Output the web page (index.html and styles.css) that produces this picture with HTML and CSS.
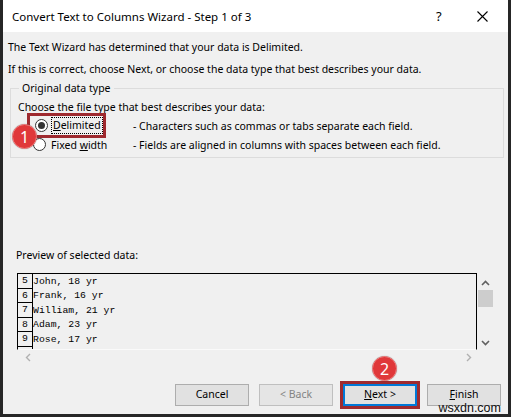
FILE: index.html
```html
<!DOCTYPE html>
<html lang="en">
<head>
  <meta charset="UTF-8">
  <title>Convert Text to Columns Wizard - Step 1 of 3</title>
  <link rel="stylesheet" href="styles.css">
</head>
<body>
  <div class="window">
    <div class="titlebar">
      <div class="title">Convert Text to Columns Wizard - Step 1 of 3</div>
      <div class="title-help">?</div>
      <div class="title-close">
        <svg width="11" height="11" viewBox="0 0 11 11"><path d="M0.5 0.5 L10.5 10.5 M10.5 0.5 L0.5 10.5" stroke="#000" stroke-width="1.1" fill="none"/></svg>
      </div>
    </div>
    <div class="content">
      <div class="intro">The Text Wizard has determined that your data is Delimited.</div>
      <div class="intro">If this is correct, choose Next, or choose the data type that best describes your data.</div>

      <fieldset class="group">
        <legend>Original data type</legend>
        <div class="group-hint">Choose the file type that best describes your data:</div>
        <div class="option">
          <div class="option-pick marked">
            <span class="radio checked"></span>
            <span class="focus"><u>D</u>elimited</span>
          </div>
          <div class="option-desc">- Characters such as commas or tabs separate each field.</div>
        </div>
        <div class="option">
          <div class="option-pick">
            <span class="radio"></span>
            <span class="plain">Fixed <u>w</u>idth</span>
          </div>
          <div class="option-desc">- Fields are aligned in columns with spaces between each field.</div>
        </div>
        <div class="badge badge-one">1</div>
      </fieldset>

      <div class="preview-label">Preview of selected data:</div>
      <div class="preview">
        <div class="preview-data">
          <div class="row"><span class="num">5</span><span class="cell">John, 18 yr</span></div>
          <div class="row"><span class="num">6</span><span class="cell">Frank, 16 yr</span></div>
          <div class="row"><span class="num">7</span><span class="cell">William, 21 yr</span></div>
          <div class="row"><span class="num">8</span><span class="cell">Adam, 23 yr</span></div>
          <div class="row"><span class="num">9</span><span class="cell">Rose, 17 yr</span></div>
          <div class="row"><span class="num"></span><span class="cell"></span></div>
        </div>
        <div class="vscroll">
          <svg width="9" height="6" viewBox="0 0 9 6"><path d="M1 5 L4.5 1.5 L8 5" stroke="#606060" stroke-width="1.6" fill="none"/></svg>
          <div class="thumb"></div>
          <div class="vspace"></div>
          <svg width="9" height="6" viewBox="0 0 9 6"><path d="M1 1 L4.5 4.5 L8 1" stroke="#606060" stroke-width="1.6" fill="none"/></svg>
        </div>
        <div class="hscroll">
          <svg width="6" height="9" viewBox="0 0 6 9"><path d="M5 1 L1.5 4.5 L5 8" stroke="#b0b0b0" stroke-width="1.4" fill="none"/></svg>
          <svg width="6" height="9" viewBox="0 0 6 9"><path d="M1 1 L4.5 4.5 L1 8" stroke="#b0b0b0" stroke-width="1.4" fill="none"/></svg>
        </div>
      </div>

      <div class="buttons">
        <button class="btn">Cancel</button>
        <button class="btn" disabled>&lt; Back</button>
        <div class="btn-mark">
          <button class="btn btn-default"><u>N</u>ext &gt;</button>
          <div class="badge badge-two">2</div>
        </div>
        <button class="btn"><u>F</u>inish</button>
      </div>
      <div class="watermark">wsxdn.com</div>
    </div>
  </div>
</body>
</html>
```

FILE: styles.css
```css
* {
  box-sizing: border-box;
}
body {
  margin: 0;
  font-family: 'Noto Sans', 'Liberation Sans', sans-serif;
  font-size: 10.5px;
  color: #000;
  background: #2b2b2b;
}
.window {
  width: 511px;
  height: 417px;
  border: 3px solid #262626;
  border-top: none;
  background: #f0f0f0;
  display: flex;
  flex-direction: column;
  overflow: hidden;
}
.titlebar {
  height: 32px;
  background: #fff;
  display: flex;
  align-items: center;
  padding-left: 9px;
}
.title {
  flex: 1;
  font-size: 11.5px;
  padding-top: 1px;
}
.title-help {
  font-size: 13px;
  width: 38px;
}
.title-close {
  width: 34px;
  display: flex;
  padding-left: 3px;
  padding-top: 1px;
}
.content {
  flex: 1;
  position: relative;
  padding: 4px 0 0 5px;
  display: flex;
  flex-direction: column;
}
.intro {
  line-height: 22px;
}
.group {
  position: relative;
  margin: 0 4px 0 2px;
  padding: 0 0 3px 7px;
  border: 1px solid #dcdcdc;
  min-width: 0;
}
.group legend {
  padding: 0 3px;
  margin-left: 1px;
  line-height: 16px;
}
.group-hint {
  line-height: 18px;
  padding-top: 2px;
}
.option {
  display: flex;
  align-items: center;
  height: 19px;
}
.option-pick {
  width: 110px;
  display: flex;
  align-items: center;
  gap: 4px;
  padding-left: 15px;
  height: 19px;
}
.option-desc {
  padding-left: 5px;
}
.marked {
  outline: 3px solid #9e2a2f;
  outline-offset: -1px;
  width: 75px;
  margin-left: 11px;
  padding-left: 6px;
  height: 21px;
  margin-right: 24px;
}
.radio {
  width: 13px;
  height: 13px;
  border-radius: 50%;
  border: 1px solid #333;
  background: #fff;
  display: inline-flex;
  align-items: center;
  justify-content: center;
}
.radio.checked::after {
  content: '';
  width: 7px;
  height: 7px;
  border-radius: 50%;
  background: #333;
}
.focus {
  outline: 1px dotted #000;
  padding: 0 1px;
  line-height: 15px;
}
.plain {
  padding-left: 1px;
}
.badge {
  position: absolute;
  width: 25px;
  height: 25px;
  border-radius: 50%;
  background: #e0383a;
  border: 1px solid #f08080;
  color: #fff;
  font-size: 16px;
  display: flex;
  align-items: center;
  justify-content: center;
  box-shadow: 0 0 1px rgba(0, 0, 0, 0.4);
}
.badge-one {
  left: 1px;
  top: 28px;
}
.preview-label {
  margin-top: 88px;
  padding-left: 8px;
  line-height: 18px;
}
.preview {
  margin: 9px 0 0 9px;
  display: grid;
  grid-template-columns: 460px 16px;
  grid-template-rows: 77px 14px;
}
.preview-data {
  border: 1px solid #000;
  overflow: hidden;
  font-family: 'Liberation Mono', monospace;
  font-size: 9.8px;
  border-bottom: 1px solid #fafafa;
}
.row {
  display: flex;
  height: 14.5px;
  align-items: center;
}
.num {
  width: 15px;
  height: 14.5px;
  border-right: 1px solid #000;
  border-bottom: 1px solid #000;
  text-align: center;
  line-height: 14px;
  flex-shrink: 0;
}
.cell {
  line-height: 14px;
  padding-top: 1px;
}
.vscroll {
  display: flex;
  flex-direction: column;
  align-items: center;
  padding-top: 7px;
}
.thumb {
  width: 15px;
  height: 17px;
  background: #cdcdcd;
  margin-top: 4px;
}
.vspace {
  flex: 1;
}
.vscroll svg:last-child {
  margin-bottom: 4px;
}
.hscroll {
  display: flex;
  justify-content: space-between;
  align-items: center;
  padding: 0 5px 0 8px;
}
.buttons {
  display: flex;
  justify-content: flex-end;
  gap: 10px;
  margin-top: 20px;
  padding-right: 7px;
}
.btn {
  width: 74px;
  height: 22px;
  background: #e1e1e1;
  border: 1px solid #adadad;
  font-family: 'Noto Sans', 'Liberation Sans', sans-serif;
  font-size: 10.5px;
  color: #000;
  padding: 0 0 2px;
}
.btn:disabled {
  color: #838383;
  background: #e5e5e5;
  border-color: #bfbfbf;
}
.btn-default {
  border: 2px solid #0078d7;
}
.btn-mark {
  position: relative;
  outline: 3px solid #9e2a2f;
  outline-offset: 0;
  display: flex;
}
.badge-two {
  left: 29px;
  top: -28px;
}
.watermark {
  position: absolute;
  right: 7px;
  bottom: 0;
  font-family: 'Liberation Sans', sans-serif;
  font-size: 12.5px;
  line-height: 12px;
  color: #111;
}
```
